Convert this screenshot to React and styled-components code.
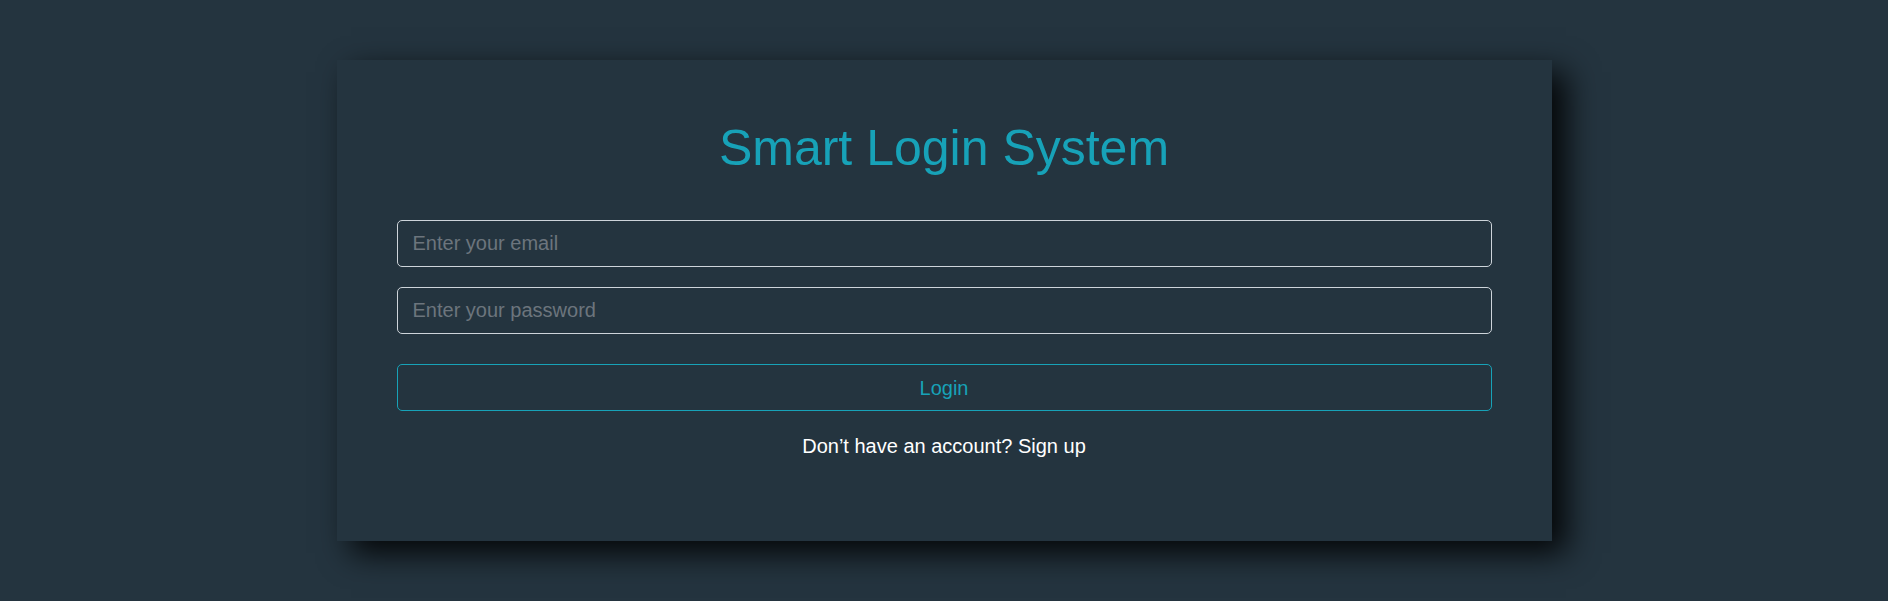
import React from "react";
import styled, { createGlobalStyle } from "styled-components";

const GlobalStyle = createGlobalStyle`
  html, body {
    margin: 0;
    padding: 0;
    background: #24343f;
    font-family: "Liberation Sans", Arial, sans-serif;
  }
  * { box-sizing: border-box; }
`;

const Page = styled.div`
  min-height: 601px;
  padding-top: 60px;
  display: flex;
  justify-content: center;
  align-items: flex-start;
`;

const Card = styled.div`
  width: 1215px;
  height: 481px;
  background: #24343f;
  box-shadow: 14px 12px 30px rgba(0, 0, 0, 0.9);
  padding: 58px 60px 0;
  display: flex;
  flex-direction: column;
`;

const Title = styled.h1`
  margin: 0 0 42px;
  font-weight: 400;
  font-size: 50px;
  line-height: 60px;
  text-align: center;
  color: #17a2b8;
`;

const Form = styled.form`
  display: flex;
  flex-direction: column;
`;

const Input = styled.input`
  height: 47px;
  width: 100%;
  margin-bottom: ${(p) => p.$mb}px;
  padding: 0 15px;
  font-family: inherit;
  font-size: 20px;
  color: #fff;
  background: transparent;
  border: 1px solid #ced4da;
  border-radius: 5px;
  outline: none;
  &::placeholder {
    color: #6c757d;
  }
`;

const Button = styled.button`
  height: 47px;
  width: 100%;
  padding-top: 2px;
  font-family: inherit;
  font-size: 20px;
  color: #17a2b8;
  background: transparent;
  border: 1px solid #17a2b8;
  border-radius: 5px;
  cursor: pointer;
`;

const Footer = styled.p`
  margin: 20px 0 0;
  text-align: center;
  font-size: 20px;
  line-height: 30px;
  color: #fff;
`;

const Link = styled.a`
  color: #fff;
  text-decoration: none;
`;

export default function App() {
  return (
    <>
      <GlobalStyle />
      <Page>
        <Card>
          <Title>Smart Login System</Title>
          <Form onSubmit={(e) => e.preventDefault()}>
            <Input type="email" placeholder="Enter your email" $mb={20} />
            <Input type="password" placeholder="Enter your password" $mb={30} />
            <Button type="submit">Login</Button>
          </Form>
          <Footer>
            Don’t have an account? <Link href="#">Sign up</Link>
          </Footer>
        </Card>
      </Page>
    </>
  );
}
